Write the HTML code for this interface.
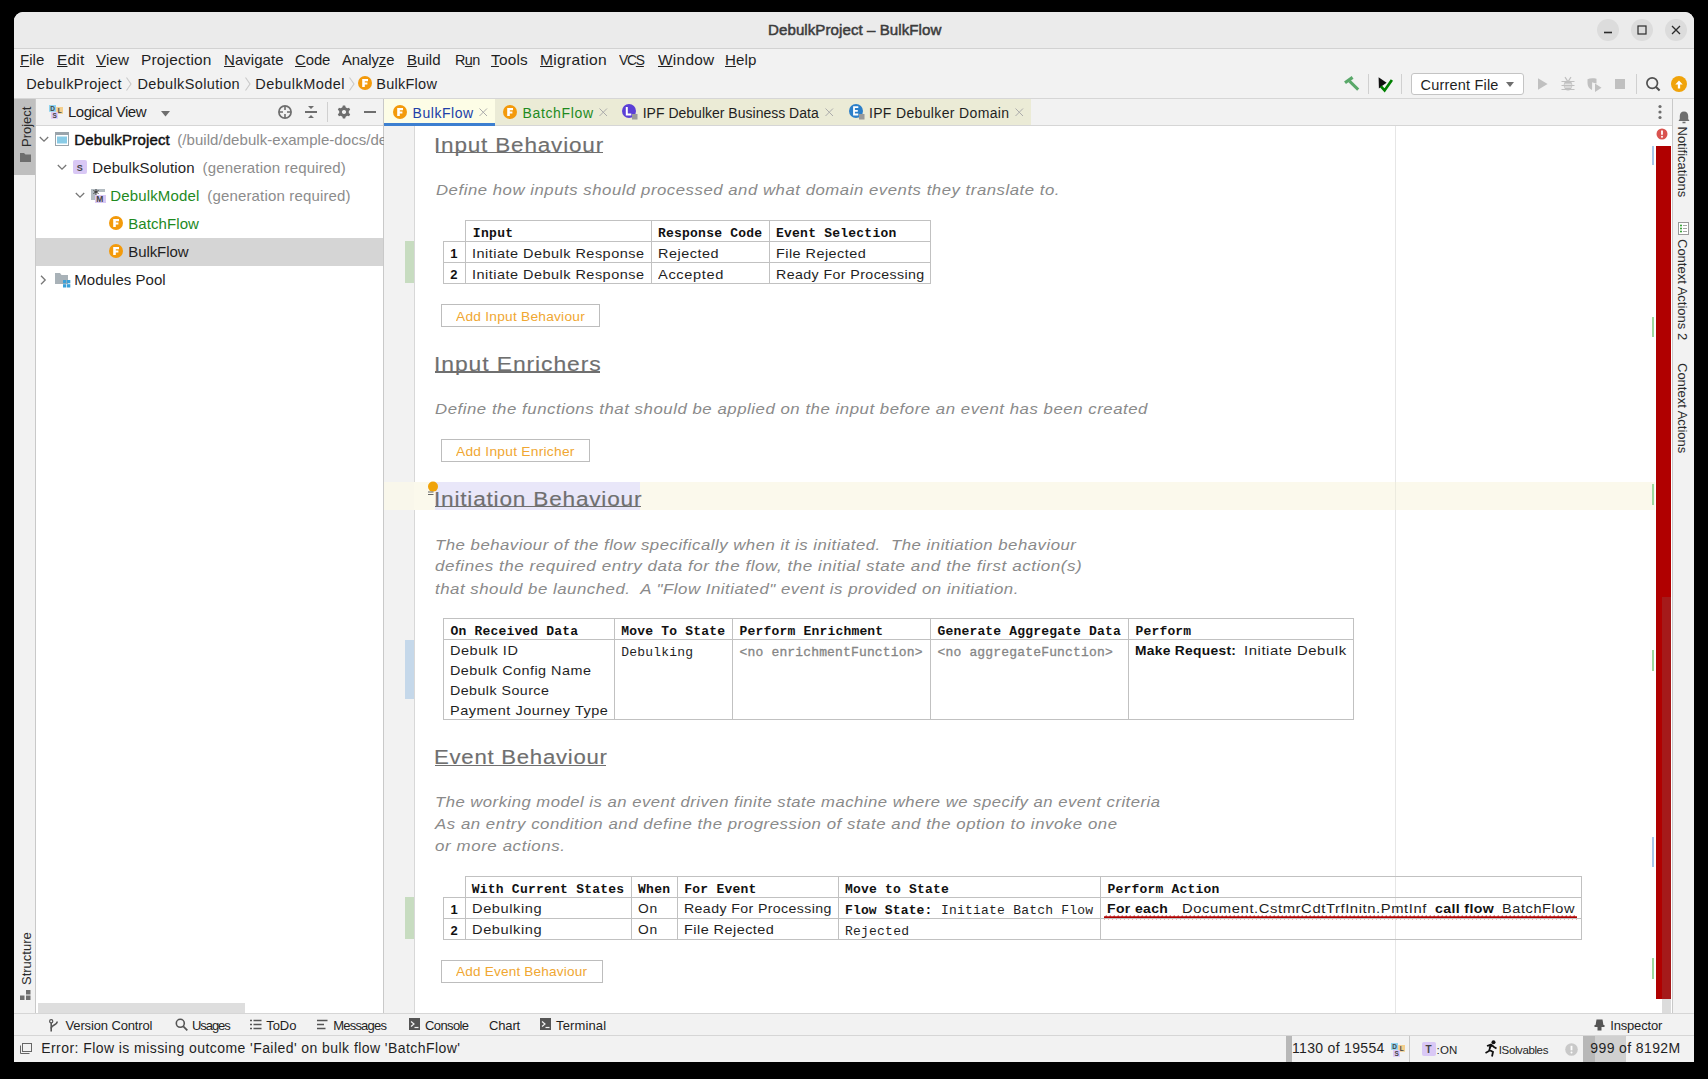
<!DOCTYPE html>
<html><head><meta charset="utf-8"><style>
html,body{margin:0;padding:0;}
body{width:1708px;height:1079px;position:relative;overflow:hidden;background:#000;font-family:"Liberation Sans", sans-serif;}
.a{position:absolute;}
.t{white-space:pre;}
</style></head><body>
<div class="a" style="left:14px;top:12px;width:1680px;height:1050px;background:#f2f2f2;border-radius:9px 9px 0 0;"></div>
<div class="a" style="left:14px;top:12px;width:1680px;height:37px;background:#ebebeb;border-radius:9px 9px 0 0;"></div>
<div class="a" style="left:14px;top:48px;width:1680px;height:1px;background:#d2d2d2;"></div>
<div class="a t" style="left:767.5px;top:21.30px;font-size:15px;line-height:18px;color:#3c3c3c;letter-spacing:0.054px;transform:scaleX(1.0073);transform-origin:0 0;-webkit-text-stroke:0.5px #3c3c3c;">DebulkProject – BulkFlow</div>
<div class="a" style="left:1597px;top:19px;width:22px;height:22px;background:#dcdcdc;border-radius:11px;"></div>
<div class="a" style="left:1631px;top:19px;width:22px;height:22px;background:#dcdcdc;border-radius:11px;"></div>
<div class="a" style="left:1665px;top:19px;width:22px;height:22px;background:#dcdcdc;border-radius:11px;"></div>
<svg class="a" style="left:1597px;top:19px;" width="22" height="22" viewBox="0 0 22 22"><path d="M7 13.5h8" stroke="#2b2b2b" stroke-width="1.6"/></svg>
<svg class="a" style="left:1631px;top:19px;" width="22" height="22" viewBox="0 0 22 22"><rect x="7" y="7" width="8" height="8" fill="none" stroke="#2b2b2b" stroke-width="1.2"/></svg>
<svg class="a" style="left:1665px;top:19px;" width="22" height="22" viewBox="0 0 22 22"><path d="M7 7l8 8M15 7l-8 8" stroke="#2b2b2b" stroke-width="1.3"/></svg>
<div class="a t" style="left:20.3px;top:51.30px;font-size:15px;line-height:18px;color:#1f1f1f;letter-spacing:0.019px;transform:scaleX(1.0024);transform-origin:0 0;text-underline-offset:1px;"><u>F</u>ile</div>
<div class="a t" style="left:57.3px;top:51.30px;font-size:15px;line-height:18px;color:#1f1f1f;letter-spacing:0.218px;transform:scaleX(1.0269);transform-origin:0 0;text-underline-offset:1px;"><u>E</u>dit</div>
<div class="a t" style="left:96px;top:51.30px;font-size:15px;line-height:18px;color:#1f1f1f;letter-spacing:0.107px;transform:scaleX(1.0104);transform-origin:0 0;text-underline-offset:1px;"><u>V</u>iew</div>
<div class="a t" style="left:141.2px;top:51.30px;font-size:15px;line-height:18px;color:#1f1f1f;letter-spacing:0.200px;transform:scaleX(1.0281);transform-origin:0 0;">Projection</div>
<div class="a t" style="left:224px;top:51.30px;font-size:15px;line-height:18px;color:#1f1f1f;letter-spacing:0.020px;transform:scaleX(1.0024);transform-origin:0 0;text-underline-offset:1px;"><u>N</u>avigate</div>
<div class="a t" style="left:295px;top:51.30px;font-size:15px;line-height:18px;color:#1f1f1f;letter-spacing:-0.080px;transform:scaleX(0.9932);transform-origin:0 0;text-underline-offset:1px;"><u>C</u>ode</div>
<div class="a t" style="left:341.9px;top:51.30px;font-size:15px;line-height:18px;color:#1f1f1f;letter-spacing:-0.082px;transform:scaleX(0.9907);transform-origin:0 0;text-underline-offset:1px;">Analy<u>z</u>e</div>
<div class="a t" style="left:407.2px;top:51.30px;font-size:15px;line-height:18px;color:#1f1f1f;letter-spacing:0.028px;transform:scaleX(1.0035);transform-origin:0 0;text-underline-offset:1px;"><u>B</u>uild</div>
<div class="a t" style="left:454.5px;top:51.30px;font-size:15px;line-height:18px;color:#1f1f1f;letter-spacing:-0.555px;transform:scaleX(0.9600);transform-origin:0 0;text-underline-offset:1px;">R<u>u</u>n</div>
<div class="a t" style="left:491.2px;top:51.30px;font-size:15px;line-height:18px;color:#1f1f1f;letter-spacing:0.204px;transform:scaleX(1.0244);transform-origin:0 0;text-underline-offset:1px;"><u>T</u>ools</div>
<div class="a t" style="left:540.3px;top:51.30px;font-size:15px;line-height:18px;color:#1f1f1f;letter-spacing:0.294px;transform:scaleX(1.0403);transform-origin:0 0;text-underline-offset:1px;"><u>M</u>igration</div>
<div class="a t" style="left:619.3px;top:51.30px;font-size:15px;line-height:18px;color:#1f1f1f;letter-spacing:-1.293px;transform:scaleX(0.9206);transform-origin:0 0;text-underline-offset:1px;">VC<u>S</u></div>
<div class="a t" style="left:657.8px;top:51.30px;font-size:15px;line-height:18px;color:#1f1f1f;letter-spacing:0.275px;transform:scaleX(1.0269);transform-origin:0 0;text-underline-offset:1px;"><u>W</u>indow</div>
<div class="a t" style="left:725px;top:51.30px;font-size:15px;line-height:18px;color:#1f1f1f;letter-spacing:0.070px;transform:scaleX(1.0071);transform-origin:0 0;text-underline-offset:1px;"><u>H</u>elp</div>
<div class="a t" style="left:26.2px;top:75.98px;font-size:14.5px;line-height:17px;color:#1f1f1f;letter-spacing:0.417px;">DebulkProject</div>
<div class="a t" style="left:137.4px;top:75.98px;font-size:14.5px;line-height:17px;color:#1f1f1f;letter-spacing:0.363px;">DebulkSolution</div>
<div class="a t" style="left:255.2px;top:75.98px;font-size:14.5px;line-height:17px;color:#1f1f1f;letter-spacing:0.473px;">DebulkModel</div>
<div class="a t" style="left:376.3px;top:75.98px;font-size:14.5px;line-height:17px;color:#1f1f1f;letter-spacing:0.249px;">BulkFlow</div>
<svg class="a" style="left:125px;top:76px;" width="8" height="16" viewBox="0 0 8 16"><path d="M1.5 1.5L6 8L1.5 14.5" fill="none" stroke="#c9c9c9" stroke-width="1.1"/></svg>
<svg class="a" style="left:244px;top:76px;" width="8" height="16" viewBox="0 0 8 16"><path d="M1.5 1.5L6 8L1.5 14.5" fill="none" stroke="#c9c9c9" stroke-width="1.1"/></svg>
<svg class="a" style="left:348px;top:76px;" width="8" height="16" viewBox="0 0 8 16"><path d="M1.5 1.5L6 8L1.5 14.5" fill="none" stroke="#c9c9c9" stroke-width="1.1"/></svg>
<svg class="a" style="left:357.5px;top:76px;" width="14" height="14" viewBox="0 0 14 14"><circle cx="7" cy="7" r="7" fill="#f39a0b"/><path d="M4.2 3h5.8v2.3H6.8v1.3h2.6v1.9H6.8V11H4.2z" fill="#fff"/></svg>
<svg class="a" style="left:1343px;top:76px;" width="18" height="16" viewBox="0 0 18 16"><path d="M2 6.8L9.6 1.4" stroke="#59a869" stroke-width="3.2"/><path d="M6.5 5.2L15.2 13.6" stroke="#59a869" stroke-width="3"/></svg>
<div class="a" style="left:1368px;top:74px;width:1px;height:20px;background:#d0d0d0;"></div>
<svg class="a" style="left:1377px;top:76px;" width="18" height="18" viewBox="0 0 18 18"><path d="M1.6 1.2L1.9 12.6 4.6 10.2 9.6 6.8z" fill="#111"/><path d="M3.9 10.3L7.6 14.4 14.9 3.9" fill="none" stroke="#008000" stroke-width="2.7"/></svg>
<div class="a" style="left:1401px;top:74px;width:1px;height:20px;background:#d0d0d0;"></div>
<div class="a" style="left:1411px;top:73px;width:113px;height:22px;background:#ffffff;border:1px solid #c4c4c4;box-sizing:border-box;border-radius:3px;"></div>
<div class="a t" style="left:1420.5px;top:76.98px;font-size:14.5px;line-height:17px;color:#1f1f1f;letter-spacing:0.193px;">Current File</div>
<svg class="a" style="left:1506px;top:82px;" width="8" height="5" viewBox="0 0 8 5"><path d="M0 0h8L4 5z" fill="#6e6e6e"/></svg>
<svg class="a" style="left:1538px;top:78px;" width="10" height="12" viewBox="0 0 10 12"><path d="M0 0.2L9.6 6 0 11.8z" fill="#c0c0c0"/></svg>
<svg class="a" style="left:1561px;top:76px;" width="14" height="15" viewBox="0 0 14 15"><path d="M4 1.2l2 3M10 1.2l-2 3" stroke="#c0c0c0" stroke-width="1.2"/><ellipse cx="7" cy="9.2" rx="4.3" ry="5.2" fill="#c0c0c0"/><path d="M0.5 5.5h13M0.5 9.5h13M0.5 13.5h13" stroke="#c0c0c0" stroke-width="1.2"/><path d="M3.5 8.2h7M3.5 11h7" stroke="#f2f2f2" stroke-width="1"/></svg>
<svg class="a" style="left:1586px;top:77px;" width="17" height="16" viewBox="0 0 17 16"><path d="M1.5 2.2C4 1.2 6.5 1 10.5 1.8V6.5L6.5 5.5V11.5L6 13 C3 11.5 1.5 9.5 1.5 6z" fill="#c0c0c0"/><path d="M9 6.5l6.5 4.3-6.5 4.3z" fill="#c0c0c0"/><path d="M6.5 5.5v8" stroke="#f2f2f2" stroke-width="0.8"/></svg>
<div class="a" style="left:1615px;top:79px;width:10px;height:10px;background:#c0c0c0;"></div>
<div class="a" style="left:1636px;top:74px;width:1px;height:20px;background:#d0d0d0;"></div>
<svg class="a" style="left:1645px;top:76px;" width="17" height="17" viewBox="0 0 17 17"><circle cx="7.2" cy="7.1" r="5.3" fill="none" stroke="#505050" stroke-width="1.7"/><path d="M11 11l3.6 3.6" stroke="#505050" stroke-width="2.1"/></svg>
<svg class="a" style="left:1671px;top:76px;" width="17" height="17" viewBox="0 0 17 17"><circle cx="8" cy="8" r="8" fill="#f0a30a"/><path d="M4.3 8.5L8 4.5 11.7 8.5z" fill="#fff"/><path d="M8 8v4.5" stroke="#fff" stroke-width="2.3"/></svg>
<div class="a" style="left:14px;top:98px;width:1680px;height:1px;background:#d6d6d6;"></div>
<div class="a" style="left:35px;top:99px;width:1px;height:914px;background:#c9c9c9;"></div>
<div class="a" style="left:14px;top:99px;width:21px;height:76px;background:#bfbfbf;"></div>
<div class="a t" style="left:0px;top:-12.00px;font-size:13px;line-height:16px;color:#2b2b2b;transform-origin:0 0;transform:translate(19px,147px) rotate(-90deg);left:0;top:0;">Project</div>
<svg class="a" style="left:20px;top:152px;" width="12" height="10" viewBox="0 0 12 10"><path d="M0 1h4l1.5 1.5H11V10H0z" fill="#6e6e6e"/></svg>
<div class="a t" style="left:0px;top:-12.00px;font-size:13px;line-height:16px;color:#2b2b2b;transform-origin:0 0;transform:translate(19px,985px) rotate(-90deg);left:0;top:0;">Structure</div>
<svg class="a" style="left:20px;top:990px;" width="11" height="10" viewBox="0 0 11 10"><rect x="6" y="0" width="4.5" height="4.5" fill="#6e6e6e"/><rect x="0" y="5.5" width="4.5" height="4.5" fill="#6e6e6e"/><rect x="6" y="5.5" width="4.5" height="4.5" fill="#6e6e6e"/></svg>
<div class="a" style="left:36px;top:99px;width:347px;height:27px;background:#f2f2f2;"></div>
<div class="a" style="left:36px;top:125px;width:347px;height:1px;background:#d6d6d6;"></div>
<div class="a" style="left:36px;top:126px;width:347px;height:887px;background:#ffffff;"></div>
<div class="a" style="left:383px;top:99px;width:1px;height:914px;background:#c9c9c9;"></div>
<svg class="a" style="left:48px;top:104px;" width="16" height="16" viewBox="0 0 16 16"><rect x="1" y="1" width="7" height="6.8" fill="#8fd3ee"/><rect x="8.2" y="3" width="6.8" height="6.8" fill="#f3cf8e"/><rect x="3" y="8" width="7" height="6.8" fill="#dccbf8"/><text x="2.3" y="7" font-size="6.5" font-weight="700" font-family="Liberation Sans" fill="#444">D</text><text x="9.8" y="9" font-size="6.5" font-weight="700" font-family="Liberation Sans" fill="#444">L</text><text x="4.5" y="14" font-size="6.5" font-weight="700" font-family="Liberation Sans" fill="#444">S</text></svg>
<div class="a t" style="left:68px;top:103.30px;font-size:15px;line-height:18px;color:#1f1f1f;letter-spacing:-0.496px;">Logical View</div>
<svg class="a" style="left:161px;top:110.5px;" width="10" height="6" viewBox="0 0 10 6"><path d="M0 0h9L4.5 5.5z" fill="#6e6e6e"/></svg>
<svg class="a" style="left:277px;top:104px;" width="16" height="16" viewBox="0 0 16 16"><circle cx="8" cy="8" r="6.1" fill="none" stroke="#6e6e6e" stroke-width="1.7"/><path d="M8 2v4M8 10v4M2 8h4M10 8h4" stroke="#6e6e6e" stroke-width="1.6"/></svg>
<svg class="a" style="left:304px;top:104px;" width="14" height="16" viewBox="0 0 14 16"><path d="M4 2h6L7 5z M4 14h6L7 11z" fill="#6e6e6e"/><path d="M1 8h12" stroke="#6e6e6e" stroke-width="2"/></svg>
<div class="a" style="left:327px;top:102px;width:1px;height:20px;background:#d0d0d0;"></div>
<svg class="a" style="left:336px;top:104px;" width="16" height="16" viewBox="0 0 16 16"><path fill-rule="evenodd" fill="#6e6e6e" d="M6.39 3.37 L6.83 1.50 L9.17 1.50 L9.61 3.37 L11.20 4.29 L13.04 3.74 L14.21 5.76 L12.81 7.08 L12.81 8.92 L14.21 10.24 L13.04 12.26 L11.20 11.71 L9.61 12.63 L9.17 14.50 L6.83 14.50 L6.39 12.63 L4.80 11.71 L2.96 12.26 L1.79 10.24 L3.19 8.92 L3.19 7.08 L1.79 5.76 L2.96 3.74 L4.80 4.29Z M8 5.9a2.1 2.1 0 1 0 0.001 0z"/></svg>
<div class="a" style="left:364px;top:111px;width:12px;height:2px;background:#6e6e6e;"></div>
<div class="a" style="left:36px;top:238px;width:347px;height:28px;background:#d5d5d5;"></div>
<svg class="a" style="left:38.8px;top:135.5px;" width="10" height="7" viewBox="0 0 10 7"><path d="M0.8 1l4.2 4.2L9.2 1" fill="none" stroke="#777" stroke-width="1.3"/></svg>
<svg class="a" style="left:55px;top:132px;" width="14" height="14" viewBox="0 0 14 14"><rect x="0.5" y="0.5" width="13" height="13" fill="#fff" stroke="#9aa4ab"/><rect x="0" y="0" width="14" height="3" fill="#9aa4ab"/><rect x="2" y="4.5" width="10" height="7" fill="#89cbe6"/></svg>
<div class="a t" style="left:74.3px;top:131.30px;font-size:15px;line-height:18px;color:#111;letter-spacing:0.176px;-webkit-text-stroke:0.45px #111;">DebulkProject</div>
<div class="a t" style="left:177.3px;top:131.30px;font-size:15px;line-height:18px;color:#8c8c8c;letter-spacing:0.05px;">(/build/debulk-example-docs/debulk</div>
<svg class="a" style="left:56.8px;top:163.5px;" width="10" height="7" viewBox="0 0 10 7"><path d="M0.8 1l4.2 4.2L9.2 1" fill="none" stroke="#777" stroke-width="1.3"/></svg>
<svg class="a" style="left:73px;top:160px;" width="14" height="14" viewBox="0 0 14 14"><rect x="0" y="0" width="14" height="14" rx="2" fill="#d9c8f5"/><text x="3.8" y="10.8" font-size="9" font-weight="700" font-family="Liberation Sans" fill="#444">S</text></svg>
<div class="a t" style="left:92.3px;top:159.30px;font-size:15px;line-height:18px;color:#1f1f1f;letter-spacing:0.100px;">DebulkSolution</div>
<div class="a t" style="left:202.5px;top:159.30px;font-size:15px;line-height:18px;color:#8c8c8c;letter-spacing:0.160px;">(generation required)</div>
<svg class="a" style="left:74.8px;top:191.5px;" width="10" height="7" viewBox="0 0 10 7"><path d="M0.8 1l4.2 4.2L9.2 1" fill="none" stroke="#777" stroke-width="1.3"/></svg>
<svg class="a" style="left:91px;top:188px;" width="16" height="16" viewBox="0 0 16 16"><path d="M0 1h14v3H5v8H0z" fill="#b4bcc2"/><rect x="4" y="7" width="11" height="8" fill="#d9c8f5"/><text x="5.3" y="14.3" font-size="8.5" font-family="Liberation Sans" font-weight="700" fill="#444">M</text><path d="M5 1v6M2.4 2.5l5.2 3M7.6 2.5l-5.2 3" stroke="#333" stroke-width="0.9"/></svg>
<div class="a t" style="left:110.3px;top:187.30px;font-size:15px;line-height:18px;color:#1e8a1e;letter-spacing:0.145px;">DebulkModel</div>
<div class="a t" style="left:207.3px;top:187.30px;font-size:15px;line-height:18px;color:#8c8c8c;letter-spacing:0.160px;">(generation required)</div>
<svg class="a" style="left:109px;top:216px;" width="14" height="14" viewBox="0 0 14 14"><circle cx="7" cy="7" r="7" fill="#f39a0b"/><path d="M4.2 3h5.8v2.3H6.8v1.3h2.6v1.9H6.8V11H4.2z" fill="#fff"/></svg>
<div class="a t" style="left:128.3px;top:215.30px;font-size:15px;line-height:18px;color:#1e8a1e;letter-spacing:0.071px;">BatchFlow</div>
<svg class="a" style="left:109px;top:244px;" width="14" height="14" viewBox="0 0 14 14"><circle cx="7" cy="7" r="7" fill="#f39a0b"/><path d="M4.2 3h5.8v2.3H6.8v1.3h2.6v1.9H6.8V11H4.2z" fill="#fff"/></svg>
<div class="a t" style="left:128.3px;top:243.30px;font-size:15px;line-height:18px;color:#1f1f1f;letter-spacing:-0.094px;">BulkFlow</div>
<svg class="a" style="left:39.8px;top:274.6px;" width="7" height="10" viewBox="0 0 7 10"><path d="M1 0.8l4.2 4.2L1 9.2" fill="none" stroke="#777" stroke-width="1.3"/></svg>
<svg class="a" style="left:55px;top:273px;" width="16" height="15" viewBox="0 0 16 15"><path d="M0 0h5l1.5 2H13V11H0z" fill="#a9b2b8"/><rect x="8" y="7" width="3.3" height="3.3" fill="#3aa0d8"/><rect x="12" y="7" width="3.3" height="3.3" fill="#3aa0d8"/><rect x="8" y="11.2" width="3.3" height="3.3" fill="#3aa0d8"/><rect x="12" y="11.2" width="3.3" height="3.3" fill="#3aa0d8"/></svg>
<div class="a t" style="left:74.3px;top:271.30px;font-size:15px;line-height:18px;color:#1f1f1f;letter-spacing:0.046px;">Modules Pool</div>
<div class="a" style="left:38px;top:1003px;width:207px;height:10px;background:#dedede;"></div>
<div class="a" style="left:384px;top:99px;width:1288px;height:27px;background:#f2f2f2;"></div>
<div class="a" style="left:495px;top:99px;width:536px;height:26px;background:#ebebd6;"></div>
<div class="a" style="left:384px;top:99px;width:111px;height:26px;background:#fdfde6;"></div>
<div class="a" style="left:384px;top:125px;width:1288px;height:1px;background:#d6d6d6;"></div>
<div class="a" style="left:384px;top:123px;width:111px;height:3px;background:#3d7fd0;"></div>
<svg class="a" style="left:393px;top:105px;" width="14" height="14" viewBox="0 0 14 14"><circle cx="7" cy="7" r="7" fill="#f39a0b"/><path d="M4.2 3h5.8v2.3H6.8v1.3h2.6v1.9H6.8V11H4.2z" fill="#fff"/></svg>
<div class="a t" style="left:412.6px;top:105.15px;font-size:14px;line-height:17px;color:#2140a8;letter-spacing:0.549px;">BulkFlow</div>
<svg class="a" style="left:479px;top:108px;" width="9" height="9" viewBox="0 0 9 9"><path d="M0.5 0.5l7.5 7.5M8 0.5l-7.5 7.5" stroke="#ababab" stroke-width="1"/></svg>
<svg class="a" style="left:502.5px;top:105px;" width="14" height="14" viewBox="0 0 14 14"><circle cx="7" cy="7" r="7" fill="#f39a0b"/><path d="M4.2 3h5.8v2.3H6.8v1.3h2.6v1.9H6.8V11H4.2z" fill="#fff"/></svg>
<div class="a t" style="left:522.5px;top:105.15px;font-size:14px;line-height:17px;color:#1e8a1e;letter-spacing:0.648px;">BatchFlow</div>
<svg class="a" style="left:599px;top:108px;" width="9" height="9" viewBox="0 0 9 9"><path d="M0.5 0.5l7.5 7.5M8 0.5l-7.5 7.5" stroke="#ababab" stroke-width="1"/></svg>
<svg class="a" style="left:622px;top:104px;" width="16" height="16" viewBox="0 0 16 16"><circle cx="7" cy="7" r="7" fill="#5b3fd6"/><path d="M4.8 3v7.5h4.5" fill="none" stroke="#fff" stroke-width="2"/><rect x="10" y="10" width="5.5" height="5.5" fill="#9a9a9a"/></svg>
<div class="a t" style="left:642.7px;top:105.15px;font-size:14px;line-height:17px;color:#1f1f1f;letter-spacing:0.007px;">IPF Debulker Business Data</div>
<svg class="a" style="left:825px;top:108px;" width="9" height="9" viewBox="0 0 9 9"><path d="M0.5 0.5l7.5 7.5M8 0.5l-7.5 7.5" stroke="#ababab" stroke-width="1"/></svg>
<svg class="a" style="left:849px;top:104px;" width="16" height="16" viewBox="0 0 16 16"><circle cx="7" cy="7" r="7" fill="#2b7fc9"/><path d="M9.3 3.2H5v7.3h4.3M5 6.8h3.8" fill="none" stroke="#fff" stroke-width="1.8"/><rect x="10" y="10" width="5.5" height="5.5" fill="#9a9a9a"/></svg>
<div class="a t" style="left:868.9px;top:105.15px;font-size:14px;line-height:17px;color:#1f1f1f;letter-spacing:0.351px;">IPF Debulker Domain</div>
<svg class="a" style="left:1015px;top:108px;" width="9" height="9" viewBox="0 0 9 9"><path d="M0.5 0.5l7.5 7.5M8 0.5l-7.5 7.5" stroke="#ababab" stroke-width="1"/></svg>
<svg class="a" style="left:1656px;top:104px;" width="8" height="16" viewBox="0 0 8 16"><circle cx="4" cy="2.5" r="1.6" fill="#6e6e6e"/><circle cx="4" cy="8" r="1.6" fill="#6e6e6e"/><circle cx="4" cy="13.5" r="1.6" fill="#6e6e6e"/></svg>
<div class="a" style="left:384px;top:126px;width:1288px;height:887px;background:#ffffff;"></div>
<div class="a" style="left:384px;top:126px;width:30px;height:887px;background:#f2f2f2;"></div>
<div class="a" style="left:414px;top:126px;width:1px;height:887px;background:#d8d8d8;"></div>
<div class="a" style="left:1395px;top:126px;width:1px;height:887px;background:#e6e6e6;"></div>
<div class="a" style="left:384px;top:482px;width:1271px;height:28px;background:#fbf9ec;"></div>
<div class="a" style="left:384px;top:482px;width:30px;height:28px;background:#f9f7eb;"></div>
<div class="a" style="left:1395px;top:482px;width:1px;height:28px;background:#ecebdf;"></div>
<div class="a" style="left:435px;top:482px;width:205px;height:28px;background:#e9e7f9;"></div>
<div class="a" style="left:405px;top:241px;width:9px;height:42px;background:#c7dcc0;"></div>
<div class="a" style="left:405px;top:640px;width:9px;height:59px;background:#c5d8ea;"></div>
<div class="a" style="left:405px;top:897px;width:9px;height:42px;background:#c7dcc0;"></div>
<div class="a t" style="left:434.3px;top:132.57px;font-size:20px;line-height:24px;color:#6f6f6f;letter-spacing:0.734px;transform:scaleX(1.1248);transform-origin:0 0;-webkit-text-stroke:0.15px #6f6f6f;">Input Behaviour</div>
<div class="a" style="left:435.5px;top:152.2px;width:167.2px;height:1.3px;background:#6f6f6f;"></div>
<div class="a t" style="left:435.5px;top:181.30px;font-size:15px;line-height:18px;color:#8a8a8a;font-style:italic;letter-spacing:0.481px;transform:scaleX(1.1156);transform-origin:0 0;">Define how inputs should processed and what domain events they translate to.</div>
<div class="a" style="left:465px;top:220px;width:466px;height:1px;background:#c1c1c1;"></div>
<div class="a" style="left:443px;top:241px;width:488px;height:1px;background:#c1c1c1;"></div>
<div class="a" style="left:443px;top:262px;width:488px;height:1px;background:#c1c1c1;"></div>
<div class="a" style="left:443px;top:283px;width:488px;height:1px;background:#c1c1c1;"></div>
<div class="a" style="left:443px;top:241px;width:1px;height:43px;background:#c1c1c1;"></div>
<div class="a" style="left:465px;top:220px;width:1px;height:64px;background:#c1c1c1;"></div>
<div class="a" style="left:651px;top:220px;width:1px;height:64px;background:#c1c1c1;"></div>
<div class="a" style="left:769px;top:220px;width:1px;height:64px;background:#c1c1c1;"></div>
<div class="a" style="left:930px;top:220px;width:1px;height:64px;background:#c1c1c1;"></div>
<div class="a t" style="left:472.8px;top:226.04px;font-size:13px;line-height:16px;color:#111111;font-family:'Liberation Mono', monospace;font-weight:700;letter-spacing:0.316px;">Input</div>
<div class="a t" style="left:657.9px;top:226.04px;font-size:13px;line-height:16px;color:#111111;font-family:'Liberation Mono', monospace;font-weight:700;letter-spacing:0.238px;">Response Code</div>
<div class="a t" style="left:776px;top:226.04px;font-size:13px;line-height:16px;color:#111111;font-family:'Liberation Mono', monospace;font-weight:700;letter-spacing:0.232px;">Event Selection</div>
<div class="a t" style="left:450.2px;top:246.00px;font-size:13px;line-height:16px;color:#111111;font-weight:700;">1</div>
<div class="a t" style="left:450.2px;top:267.00px;font-size:13px;line-height:16px;color:#111111;font-weight:700;">2</div>
<div class="a t" style="left:472.3px;top:246.00px;font-size:13px;line-height:16px;color:#1f1f1f;letter-spacing:0.427px;transform:scaleX(1.1142);transform-origin:0 0;">Initiate Debulk Response</div>
<div class="a t" style="left:472.3px;top:267.00px;font-size:13px;line-height:16px;color:#1f1f1f;letter-spacing:0.427px;transform:scaleX(1.1142);transform-origin:0 0;">Initiate Debulk Response</div>
<div class="a t" style="left:657.9px;top:246.00px;font-size:13px;line-height:16px;color:#1f1f1f;letter-spacing:0.472px;transform:scaleX(1.1089);transform-origin:0 0;">Rejected</div>
<div class="a t" style="left:657.9px;top:267.00px;font-size:13px;line-height:16px;color:#1f1f1f;letter-spacing:0.563px;transform:scaleX(1.1244);transform-origin:0 0;">Accepted</div>
<div class="a t" style="left:776px;top:246.00px;font-size:13px;line-height:16px;color:#1f1f1f;letter-spacing:0.414px;transform:scaleX(1.1103);transform-origin:0 0;">File Rejected</div>
<div class="a t" style="left:776px;top:267.00px;font-size:13px;line-height:16px;color:#1f1f1f;letter-spacing:0.377px;transform:scaleX(1.0918);transform-origin:0 0;">Ready For Processing</div>
<div class="a" style="left:441px;top:304px;width:159px;height:23px;background:#ffffff;border:1px solid #bdbdbd;box-sizing:border-box;"></div>
<div class="a t" style="left:456.3px;top:309.00px;font-size:13px;line-height:16px;color:#f0a732;letter-spacing:0.229px;transform:scaleX(1.0557);transform-origin:0 0;">Add Input Behaviour</div>
<div class="a t" style="left:434.0px;top:351.57px;font-size:20px;line-height:24px;color:#6f6f6f;letter-spacing:0.799px;transform:scaleX(1.1439);transform-origin:0 0;-webkit-text-stroke:0.15px #6f6f6f;">Input Enrichers</div>
<div class="a" style="left:435.2px;top:371.3px;width:164.7px;height:1.3px;background:#6f6f6f;"></div>
<div class="a t" style="left:435.2px;top:400.30px;font-size:15px;line-height:18px;color:#8a8a8a;font-style:italic;letter-spacing:0.478px;transform:scaleX(1.1190);transform-origin:0 0;">Define the functions that should be applied on the input before an event has been created</div>
<div class="a" style="left:441px;top:439px;width:149px;height:23px;background:#ffffff;border:1px solid #bdbdbd;box-sizing:border-box;"></div>
<div class="a t" style="left:455.9px;top:444.00px;font-size:13px;line-height:16px;color:#f0a732;letter-spacing:0.237px;transform:scaleX(1.0600);transform-origin:0 0;">Add Input Enricher</div>
<div class="a t" style="left:434.0px;top:486.57px;font-size:20px;line-height:24px;color:#6f6f6f;letter-spacing:0.692px;transform:scaleX(1.1321);transform-origin:0 0;-webkit-text-stroke:0.15px #6f6f6f;">Initiation Behaviour</div>
<div class="a" style="left:435.2px;top:506.2px;width:205.5px;height:1.3px;background:#6f6f6f;"></div>
<svg class="a" style="left:426px;top:480px;" width="14" height="18" viewBox="0 0 14 18"><circle cx="7" cy="6.6" r="5" fill="#f0a30a"/><path d="M2 12h5.5M2 14.5h5.5" stroke="#555" stroke-width="0.9"/></svg>
<div class="a t" style="left:435.2px;top:536.30px;font-size:15px;line-height:18px;color:#8a8a8a;font-style:italic;letter-spacing:0.444px;transform:scaleX(1.1185);transform-origin:0 0;">The behaviour of the flow specifically when it is initiated.  The initiation behaviour</div>
<div class="a t" style="left:435.2px;top:557.30px;font-size:15px;line-height:18px;color:#8a8a8a;font-style:italic;letter-spacing:0.484px;transform:scaleX(1.1342);transform-origin:0 0;">defines the required entry data for the flow, the initial state and the first action(s)</div>
<div class="a t" style="left:435.2px;top:580.30px;font-size:15px;line-height:18px;color:#8a8a8a;font-style:italic;letter-spacing:0.458px;transform:scaleX(1.1207);transform-origin:0 0;">that should be launched.  A &quot;Flow Initiated&quot; event is provided on initiation.</div>
<div class="a" style="left:443px;top:618px;width:911px;height:1px;background:#c1c1c1;"></div>
<div class="a" style="left:443px;top:639px;width:911px;height:1px;background:#c1c1c1;"></div>
<div class="a" style="left:443px;top:719px;width:911px;height:1px;background:#c1c1c1;"></div>
<div class="a" style="left:443px;top:618px;width:1px;height:102px;background:#c1c1c1;"></div>
<div class="a" style="left:614px;top:618px;width:1px;height:102px;background:#c1c1c1;"></div>
<div class="a" style="left:732px;top:618px;width:1px;height:102px;background:#c1c1c1;"></div>
<div class="a" style="left:930px;top:618px;width:1px;height:102px;background:#c1c1c1;"></div>
<div class="a" style="left:1128px;top:618px;width:1px;height:102px;background:#c1c1c1;"></div>
<div class="a" style="left:1353px;top:618px;width:1px;height:102px;background:#c1c1c1;"></div>
<div class="a t" style="left:450.4px;top:624.04px;font-size:13px;line-height:16px;color:#111111;font-family:'Liberation Mono', monospace;font-weight:700;letter-spacing:0.197px;">On Received Data</div>
<div class="a t" style="left:621.3px;top:624.04px;font-size:13px;line-height:16px;color:#111111;font-family:'Liberation Mono', monospace;font-weight:700;letter-spacing:0.205px;">Move To State</div>
<div class="a t" style="left:739.6px;top:624.04px;font-size:13px;line-height:16px;color:#111111;font-family:'Liberation Mono', monospace;font-weight:700;letter-spacing:0.185px;">Perform Enrichment</div>
<div class="a t" style="left:937.5px;top:624.04px;font-size:13px;line-height:16px;color:#111111;font-family:'Liberation Mono', monospace;font-weight:700;letter-spacing:0.175px;">Generate Aggregate Data</div>
<div class="a t" style="left:1135.4px;top:624.04px;font-size:13px;line-height:16px;color:#111111;font-family:'Liberation Mono', monospace;font-weight:700;letter-spacing:0.195px;">Perform</div>
<div class="a t" style="left:450.4px;top:643.00px;font-size:13px;line-height:16px;color:#1f1f1f;letter-spacing:0.480px;transform:scaleX(1.1141);transform-origin:0 0;">Debulk ID</div>
<div class="a t" style="left:450.4px;top:663.00px;font-size:13px;line-height:16px;color:#1f1f1f;letter-spacing:0.444px;transform:scaleX(1.1049);transform-origin:0 0;">Debulk Config Name</div>
<div class="a t" style="left:450.4px;top:683.00px;font-size:13px;line-height:16px;color:#1f1f1f;letter-spacing:0.411px;transform:scaleX(1.0958);transform-origin:0 0;">Debulk Source</div>
<div class="a t" style="left:450.4px;top:703.00px;font-size:13px;line-height:16px;color:#1f1f1f;letter-spacing:0.473px;transform:scaleX(1.1139);transform-origin:0 0;">Payment Journey Type</div>
<div class="a t" style="left:621.3px;top:645.04px;font-size:13px;line-height:16px;color:#1f1f1f;font-family:'Liberation Mono', monospace;letter-spacing:0.183px;">Debulking</div>
<div class="a t" style="left:739.6px;top:645.04px;font-size:13px;line-height:16px;color:#858585;font-family:'Liberation Mono', monospace;letter-spacing:0.156px;-webkit-text-stroke:0.3px #858585;">&lt;no enrichmentFunction&gt;</div>
<div class="a t" style="left:937.5px;top:645.04px;font-size:13px;line-height:16px;color:#858585;font-family:'Liberation Mono', monospace;letter-spacing:0.173px;-webkit-text-stroke:0.3px #858585;">&lt;no aggregateFunction&gt;</div>
<div class="a t" style="left:1135.4px;top:643.00px;font-size:13px;line-height:16px;color:#111;font-weight:700;letter-spacing:0.287px;transform:scaleX(1.0602);transform-origin:0 0;">Make Request:</div>
<div class="a t" style="left:1244.3px;top:643.00px;font-size:13px;line-height:16px;color:#1f1f1f;letter-spacing:0.489px;transform:scaleX(1.1440);transform-origin:0 0;">Initiate Debulk</div>
<div class="a t" style="left:433.90000000000003px;top:744.57px;font-size:20px;line-height:24px;color:#6f6f6f;letter-spacing:0.672px;transform:scaleX(1.1073);transform-origin:0 0;-webkit-text-stroke:0.15px #6f6f6f;">Event Behaviour</div>
<div class="a" style="left:435.1px;top:764.9px;width:171px;height:1.3px;background:#6f6f6f;"></div>
<div class="a t" style="left:435.1px;top:793.30px;font-size:15px;line-height:18px;color:#8a8a8a;font-style:italic;letter-spacing:0.447px;transform:scaleX(1.1109);transform-origin:0 0;">The working model is an event driven finite state machine where we specify an event criteria</div>
<div class="a t" style="left:435.1px;top:815.30px;font-size:15px;line-height:18px;color:#8a8a8a;font-style:italic;letter-spacing:0.479px;transform:scaleX(1.1206);transform-origin:0 0;">As an entry condition and define the progression of state and the option to invoke one</div>
<div class="a t" style="left:435.1px;top:837.30px;font-size:15px;line-height:18px;color:#8a8a8a;font-style:italic;letter-spacing:0.529px;transform:scaleX(1.1258);transform-origin:0 0;">or more actions.</div>
<div class="a" style="left:465px;top:876px;width:1117px;height:1px;background:#c1c1c1;"></div>
<div class="a" style="left:443px;top:897px;width:1139px;height:1px;background:#c1c1c1;"></div>
<div class="a" style="left:443px;top:918px;width:1139px;height:1px;background:#c1c1c1;"></div>
<div class="a" style="left:443px;top:939px;width:1139px;height:1px;background:#c1c1c1;"></div>
<div class="a" style="left:443px;top:897px;width:1px;height:43px;background:#c1c1c1;"></div>
<div class="a" style="left:465px;top:876px;width:1px;height:64px;background:#c1c1c1;"></div>
<div class="a" style="left:631px;top:876px;width:1px;height:64px;background:#c1c1c1;"></div>
<div class="a" style="left:677px;top:876px;width:1px;height:64px;background:#c1c1c1;"></div>
<div class="a" style="left:838px;top:876px;width:1px;height:64px;background:#c1c1c1;"></div>
<div class="a" style="left:1100px;top:876px;width:1px;height:64px;background:#c1c1c1;"></div>
<div class="a" style="left:1581px;top:876px;width:1px;height:64px;background:#c1c1c1;"></div>
<div class="a t" style="left:471.7px;top:882.04px;font-size:13px;line-height:16px;color:#111111;font-family:'Liberation Mono', monospace;font-weight:700;letter-spacing:0.236px;">With Current States</div>
<div class="a t" style="left:637.9px;top:882.04px;font-size:13px;line-height:16px;color:#111111;font-family:'Liberation Mono', monospace;font-weight:700;letter-spacing:0.320px;">When</div>
<div class="a t" style="left:684.3px;top:882.04px;font-size:13px;line-height:16px;color:#111111;font-family:'Liberation Mono', monospace;font-weight:700;letter-spacing:0.220px;">For Event</div>
<div class="a t" style="left:845px;top:882.04px;font-size:13px;line-height:16px;color:#111111;font-family:'Liberation Mono', monospace;font-weight:700;letter-spacing:0.197px;">Move to State</div>
<div class="a t" style="left:1107.4px;top:882.04px;font-size:13px;line-height:16px;color:#111111;font-family:'Liberation Mono', monospace;font-weight:700;letter-spacing:0.205px;">Perform Action</div>
<div class="a t" style="left:450.6px;top:902.00px;font-size:13px;line-height:16px;color:#111111;font-weight:700;">1</div>
<div class="a t" style="left:450.6px;top:923.00px;font-size:13px;line-height:16px;color:#111111;font-weight:700;">2</div>
<div class="a t" style="left:471.7px;top:901.00px;font-size:13px;line-height:16px;color:#1f1f1f;letter-spacing:0.523px;transform:scaleX(1.1236);transform-origin:0 0;">Debulking</div>
<div class="a t" style="left:637.9px;top:901.00px;font-size:13px;line-height:16px;color:#1f1f1f;letter-spacing:0.653px;transform:scaleX(1.0629);transform-origin:0 0;">On</div>
<div class="a t" style="left:471.7px;top:922.00px;font-size:13px;line-height:16px;color:#1f1f1f;letter-spacing:0.523px;transform:scaleX(1.1236);transform-origin:0 0;">Debulking</div>
<div class="a t" style="left:637.9px;top:922.00px;font-size:13px;line-height:16px;color:#1f1f1f;letter-spacing:0.653px;transform:scaleX(1.0629);transform-origin:0 0;">On</div>
<div class="a t" style="left:684.3px;top:901.00px;font-size:13px;line-height:16px;color:#1f1f1f;letter-spacing:0.363px;transform:scaleX(1.0880);transform-origin:0 0;">Ready For Processing</div>
<div class="a t" style="left:684.3px;top:922.00px;font-size:13px;line-height:16px;color:#1f1f1f;letter-spacing:0.417px;transform:scaleX(1.1111);transform-origin:0 0;">File Rejected</div>
<div class="a t" style="left:845px;top:903.04px;font-size:13px;line-height:16px;color:#111111;font-family:'Liberation Mono', monospace;font-weight:700;letter-spacing:0.155px;">Flow State:</div>
<div class="a t" style="left:941px;top:903.04px;font-size:13px;line-height:16px;color:#1f1f1f;font-family:'Liberation Mono', monospace;letter-spacing:0.214px;">Initiate Batch Flow</div>
<div class="a t" style="left:845px;top:924.04px;font-size:13px;line-height:16px;color:#1f1f1f;font-family:'Liberation Mono', monospace;letter-spacing:0.223px;">Rejected</div>
<div class="a t" style="left:1107.4px;top:901.00px;font-size:13px;line-height:16px;color:#111;font-weight:700;letter-spacing:0.351px;transform:scaleX(1.0741);transform-origin:0 0;">For each</div>
<div class="a t" style="left:1182px;top:901.00px;font-size:13px;line-height:16px;color:#1f1f1f;letter-spacing:0.515px;transform:scaleX(1.1374);transform-origin:0 0;">Document.CstmrCdtTrfInitn.PmtInf</div>
<div class="a t" style="left:1434.6px;top:901.00px;font-size:13px;line-height:16px;color:#111;font-weight:700;letter-spacing:0.339px;transform:scaleX(1.0877);transform-origin:0 0;">call flow</div>
<div class="a t" style="left:1501.6px;top:901.00px;font-size:13px;line-height:16px;color:#1f1f1f;letter-spacing:0.523px;transform:scaleX(1.1169);transform-origin:0 0;">BatchFlow</div>
<svg class="a" style="left:1104px;top:913px;" width="474" height="8" viewBox="0 0 474 8"><rect x="0" y="3.3" width="473" height="1.7" fill="#b00000"/><path d="M1 3.6l1.2 -1.3 1.2 1.3zM5 3.6l1.2 -1.3 1.2 1.3zM9 3.6l1.2 -1.3 1.2 1.3zM13 3.6l1.2 -1.3 1.2 1.3zM17 3.6l1.2 -1.3 1.2 1.3zM21 3.6l1.2 -1.3 1.2 1.3zM25 3.6l1.2 -1.3 1.2 1.3zM29 3.6l1.2 -1.3 1.2 1.3zM33 3.6l1.2 -1.3 1.2 1.3zM37 3.6l1.2 -1.3 1.2 1.3zM41 3.6l1.2 -1.3 1.2 1.3zM45 3.6l1.2 -1.3 1.2 1.3zM49 3.6l1.2 -1.3 1.2 1.3zM53 3.6l1.2 -1.3 1.2 1.3zM57 3.6l1.2 -1.3 1.2 1.3zM61 3.6l1.2 -1.3 1.2 1.3zM65 3.6l1.2 -1.3 1.2 1.3zM69 3.6l1.2 -1.3 1.2 1.3zM73 3.6l1.2 -1.3 1.2 1.3zM77 3.6l1.2 -1.3 1.2 1.3zM81 3.6l1.2 -1.3 1.2 1.3zM85 3.6l1.2 -1.3 1.2 1.3zM89 3.6l1.2 -1.3 1.2 1.3zM93 3.6l1.2 -1.3 1.2 1.3zM97 3.6l1.2 -1.3 1.2 1.3zM101 3.6l1.2 -1.3 1.2 1.3zM105 3.6l1.2 -1.3 1.2 1.3zM109 3.6l1.2 -1.3 1.2 1.3zM113 3.6l1.2 -1.3 1.2 1.3zM117 3.6l1.2 -1.3 1.2 1.3zM121 3.6l1.2 -1.3 1.2 1.3zM125 3.6l1.2 -1.3 1.2 1.3zM129 3.6l1.2 -1.3 1.2 1.3zM133 3.6l1.2 -1.3 1.2 1.3zM137 3.6l1.2 -1.3 1.2 1.3zM141 3.6l1.2 -1.3 1.2 1.3zM145 3.6l1.2 -1.3 1.2 1.3zM149 3.6l1.2 -1.3 1.2 1.3zM153 3.6l1.2 -1.3 1.2 1.3zM157 3.6l1.2 -1.3 1.2 1.3zM161 3.6l1.2 -1.3 1.2 1.3zM165 3.6l1.2 -1.3 1.2 1.3zM169 3.6l1.2 -1.3 1.2 1.3zM173 3.6l1.2 -1.3 1.2 1.3zM177 3.6l1.2 -1.3 1.2 1.3zM181 3.6l1.2 -1.3 1.2 1.3zM185 3.6l1.2 -1.3 1.2 1.3zM189 3.6l1.2 -1.3 1.2 1.3zM193 3.6l1.2 -1.3 1.2 1.3zM197 3.6l1.2 -1.3 1.2 1.3zM201 3.6l1.2 -1.3 1.2 1.3zM205 3.6l1.2 -1.3 1.2 1.3zM209 3.6l1.2 -1.3 1.2 1.3zM213 3.6l1.2 -1.3 1.2 1.3zM217 3.6l1.2 -1.3 1.2 1.3zM221 3.6l1.2 -1.3 1.2 1.3zM225 3.6l1.2 -1.3 1.2 1.3zM229 3.6l1.2 -1.3 1.2 1.3zM233 3.6l1.2 -1.3 1.2 1.3zM237 3.6l1.2 -1.3 1.2 1.3zM241 3.6l1.2 -1.3 1.2 1.3zM245 3.6l1.2 -1.3 1.2 1.3zM249 3.6l1.2 -1.3 1.2 1.3zM253 3.6l1.2 -1.3 1.2 1.3zM257 3.6l1.2 -1.3 1.2 1.3zM261 3.6l1.2 -1.3 1.2 1.3zM265 3.6l1.2 -1.3 1.2 1.3zM269 3.6l1.2 -1.3 1.2 1.3zM273 3.6l1.2 -1.3 1.2 1.3zM277 3.6l1.2 -1.3 1.2 1.3zM281 3.6l1.2 -1.3 1.2 1.3zM285 3.6l1.2 -1.3 1.2 1.3zM289 3.6l1.2 -1.3 1.2 1.3zM293 3.6l1.2 -1.3 1.2 1.3zM297 3.6l1.2 -1.3 1.2 1.3zM301 3.6l1.2 -1.3 1.2 1.3zM305 3.6l1.2 -1.3 1.2 1.3zM309 3.6l1.2 -1.3 1.2 1.3zM313 3.6l1.2 -1.3 1.2 1.3zM317 3.6l1.2 -1.3 1.2 1.3zM321 3.6l1.2 -1.3 1.2 1.3zM325 3.6l1.2 -1.3 1.2 1.3zM329 3.6l1.2 -1.3 1.2 1.3zM333 3.6l1.2 -1.3 1.2 1.3zM337 3.6l1.2 -1.3 1.2 1.3zM341 3.6l1.2 -1.3 1.2 1.3zM345 3.6l1.2 -1.3 1.2 1.3zM349 3.6l1.2 -1.3 1.2 1.3zM353 3.6l1.2 -1.3 1.2 1.3zM357 3.6l1.2 -1.3 1.2 1.3zM361 3.6l1.2 -1.3 1.2 1.3zM365 3.6l1.2 -1.3 1.2 1.3zM369 3.6l1.2 -1.3 1.2 1.3zM373 3.6l1.2 -1.3 1.2 1.3zM377 3.6l1.2 -1.3 1.2 1.3zM381 3.6l1.2 -1.3 1.2 1.3zM385 3.6l1.2 -1.3 1.2 1.3zM389 3.6l1.2 -1.3 1.2 1.3zM393 3.6l1.2 -1.3 1.2 1.3zM397 3.6l1.2 -1.3 1.2 1.3zM401 3.6l1.2 -1.3 1.2 1.3zM405 3.6l1.2 -1.3 1.2 1.3zM409 3.6l1.2 -1.3 1.2 1.3zM413 3.6l1.2 -1.3 1.2 1.3zM417 3.6l1.2 -1.3 1.2 1.3zM421 3.6l1.2 -1.3 1.2 1.3zM425 3.6l1.2 -1.3 1.2 1.3zM429 3.6l1.2 -1.3 1.2 1.3zM433 3.6l1.2 -1.3 1.2 1.3zM437 3.6l1.2 -1.3 1.2 1.3zM441 3.6l1.2 -1.3 1.2 1.3zM445 3.6l1.2 -1.3 1.2 1.3zM449 3.6l1.2 -1.3 1.2 1.3zM453 3.6l1.2 -1.3 1.2 1.3zM457 3.6l1.2 -1.3 1.2 1.3zM461 3.6l1.2 -1.3 1.2 1.3zM465 3.6l1.2 -1.3 1.2 1.3zM469 3.6l1.2 -1.3 1.2 1.3z" fill="#b00000"/><path d="M0 6.5h473" stroke="#f2b8b8" stroke-width="1" stroke-dasharray="1 3"/></svg>
<div class="a" style="left:441px;top:960px;width:162px;height:23px;background:#ffffff;border:1px solid #bdbdbd;box-sizing:border-box;"></div>
<div class="a t" style="left:456.2px;top:964.00px;font-size:13px;line-height:16px;color:#f0a732;letter-spacing:0.188px;transform:scaleX(1.0437);transform-origin:0 0;">Add Event Behaviour</div>
<svg class="a" style="left:1656px;top:128px;" width="12" height="12" viewBox="0 0 12 12"><circle cx="6" cy="6" r="5.5" fill="#d9534f"/><path d="M6 2.5v4.3" stroke="#fff" stroke-width="1.8"/><circle cx="6" cy="8.8" r="1" fill="#fff"/></svg>
<div class="a" style="left:1656px;top:146px;width:15px;height:853px;background:#b00000;"></div>
<div class="a" style="left:1662px;top:597px;width:9px;height:402px;background:#a51a1a;"></div>
<div class="a" style="left:1662px;top:999px;width:9px;height:14px;background:#dcdcdc;"></div>
<div class="a" style="left:1652px;top:146px;width:1.5px;height:19px;background:#a8c8ea;"></div>
<div class="a" style="left:1652px;top:317px;width:1.5px;height:20px;background:#9fd89f;"></div>
<div class="a" style="left:1652px;top:484px;width:1.5px;height:21px;background:#9fd89f;"></div>
<div class="a" style="left:1652px;top:650px;width:1.5px;height:21px;background:#9fd89f;"></div>
<div class="a" style="left:1652px;top:958px;width:1.5px;height:21px;background:#9fd89f;"></div>
<div class="a" style="left:1652px;top:837px;width:2px;height:30px;background:#a8c8ea;"></div>
<div class="a" style="left:1672px;top:99px;width:1px;height:914px;background:#c9c9c9;"></div>
<div class="a" style="left:1673px;top:99px;width:21px;height:914px;background:#f2f2f2;"></div>
<svg class="a" style="left:1678px;top:111px;" width="12" height="13" viewBox="0 0 12 13"><path d="M6 0.5c-2.7 0-4.2 2-4.2 4.6V8L0.5 10h11L10.2 8V5.1C10.2 2.5 8.7 0.5 6 0.5z" fill="#6e6e6e"/><path d="M4.5 11.5h3" stroke="#6e6e6e" stroke-width="1.5"/></svg>
<div class="a t" style="left:0px;top:-12.00px;font-size:13px;line-height:16px;color:#2b2b2b;transform-origin:0 0;transform:translate(1690px,126.5px) rotate(90deg);left:0;top:0;">Notifications</div>
<svg class="a" style="left:1678px;top:222px;" width="11" height="13" viewBox="0 0 11 13"><rect x="0.5" y="0.5" width="10" height="12" fill="#fff" stroke="#9a9a9a"/><circle cx="3" cy="3.5" r="1" fill="#2a9a2a"/><circle cx="3" cy="6.5" r="1" fill="#2a9a2a"/><circle cx="3" cy="9.5" r="1" fill="#2a9a2a"/><path d="M5 3.5h4M5 6.5h4M5 9.5h4" stroke="#9a9a9a" stroke-width="0.9"/></svg>
<div class="a t" style="left:0px;top:-12.00px;font-size:13px;line-height:16px;color:#2b2b2b;transform-origin:0 0;transform:translate(1690px,239px) rotate(90deg);left:0;top:0;">Context Actions 2</div>
<div class="a t" style="left:0px;top:-12.00px;font-size:13px;line-height:16px;color:#2b2b2b;transform-origin:0 0;transform:translate(1690px,363px) rotate(90deg);left:0;top:0;">Context Actions</div>
<div class="a" style="left:14px;top:1013px;width:1680px;height:1px;background:#d6d6d6;"></div>
<div class="a" style="left:14px;top:1014px;width:1680px;height:22px;background:#f2f2f2;"></div>
<svg class="a" style="left:49px;top:1019px;" width="10" height="13" viewBox="0 0 10 13"><circle cx="2.2" cy="2.2" r="1.6" fill="none" stroke="#555" stroke-width="1.2"/><path d="M2.2 4v8.5" stroke="#555" stroke-width="1.6"/><path d="M8.2 2.5c0 4-6 3-6 7" fill="none" stroke="#555" stroke-width="1.5"/></svg>
<div class="a t" style="left:65.5px;top:1018.00px;font-size:13px;line-height:16px;color:#1f1f1f;letter-spacing:-0.136px;">Version Control</div>
<svg class="a" style="left:175px;top:1018px;" width="13" height="13" viewBox="0 0 13 13"><circle cx="5.3" cy="5.3" r="4" fill="none" stroke="#555" stroke-width="1.6"/><path d="M8.3 8.3l4 4" stroke="#555" stroke-width="1.8"/></svg>
<div class="a t" style="left:192px;top:1018.00px;font-size:13px;line-height:16px;color:#1f1f1f;letter-spacing:-1.060px;">Usages</div>
<svg class="a" style="left:250px;top:1019px;" width="12" height="11" viewBox="0 0 12 11"><path d="M0 1.5h2M0 5.5h2M0 9.5h2M3.5 1.5h8M3.5 5.5h8M3.5 9.5h8" stroke="#555" stroke-width="1.4"/></svg>
<div class="a t" style="left:266.2px;top:1018.00px;font-size:13px;line-height:16px;color:#1f1f1f;letter-spacing:-0.026px;">ToDo</div>
<svg class="a" style="left:317px;top:1019px;" width="11" height="11" viewBox="0 0 11 11"><path d="M0 1.5h10.5M0 5.5h7M0 9.5h8.5" stroke="#555" stroke-width="1.5"/></svg>
<div class="a t" style="left:333.2px;top:1018.00px;font-size:13px;line-height:16px;color:#1f1f1f;letter-spacing:-0.781px;">Messages</div>
<svg class="a" style="left:408.5px;top:1018px;" width="11" height="12" viewBox="0 0 11 12"><rect x="0" y="0" width="11" height="12" fill="#555"/><path d="M2 3.5l3 2.5-3 2.5" fill="none" stroke="#f2f2f2" stroke-width="1.2"/><path d="M5.5 9.5h4" stroke="#f2f2f2" stroke-width="1.2"/></svg>
<div class="a t" style="left:425px;top:1018.00px;font-size:13px;line-height:16px;color:#1f1f1f;letter-spacing:-0.604px;">Console</div>
<div class="a t" style="left:489px;top:1018.00px;font-size:13px;line-height:16px;color:#1f1f1f;letter-spacing:-0.154px;">Chart</div>
<svg class="a" style="left:539.5px;top:1018px;" width="11" height="12" viewBox="0 0 11 12"><rect x="0" y="0" width="11" height="12" fill="#555"/><path d="M2 3.5l3 2.5-3 2.5" fill="none" stroke="#f2f2f2" stroke-width="1.2"/><path d="M5.5 9.5h4" stroke="#f2f2f2" stroke-width="1.2"/></svg>
<div class="a t" style="left:556px;top:1018.00px;font-size:13px;line-height:16px;color:#1f1f1f;letter-spacing:0.136px;">Terminal</div>
<svg class="a" style="left:1594px;top:1019px;" width="11" height="12" viewBox="0 0 11 12"><path d="M2.5 0.5h6l1 6h-8z" fill="#555"/><rect x="0.5" y="6" width="10" height="2" fill="#555"/><path d="M3.5 8v3.5h4V8" fill="#555"/></svg>
<div class="a t" style="left:1610.3px;top:1018.00px;font-size:13px;line-height:16px;color:#1f1f1f;letter-spacing:-0.188px;">Inspector</div>
<div class="a" style="left:14px;top:1035px;width:1680px;height:1px;background:#d6d6d6;"></div>
<div class="a" style="left:14px;top:1036px;width:1680px;height:26px;background:#f2f2f2;"></div>
<svg class="a" style="left:20px;top:1043px;" width="12" height="11" viewBox="0 0 12 11"><rect x="2.5" y="0.5" width="9" height="8" fill="none" stroke="#666"/><path d="M0.5 2.5v8h9" fill="none" stroke="#666"/></svg>
<div class="a t" style="left:41.2px;top:1040.15px;font-size:14px;line-height:17px;color:#1f1f1f;letter-spacing:0.438px;">Error: Flow is missing outcome &#x27;Failed&#x27; on bulk flow &#x27;BatchFlow&#x27;</div>
<div class="a" style="left:1286px;top:1036px;width:6px;height:26px;background:#b8b8b8;"></div>
<div class="a t" style="left:1292px;top:1040.15px;font-size:14px;line-height:17px;color:#1f1f1f;letter-spacing:0.320px;">1130 of 19554</div>
<svg class="a" style="left:1390px;top:1042px;" width="16" height="16" viewBox="0 0 16 16"><rect x="1" y="1" width="7" height="6.8" fill="#8fd3ee"/><rect x="8.2" y="3" width="6.8" height="6.8" fill="#f3cf8e"/><rect x="3" y="8" width="7" height="6.8" fill="#dccbf8"/><text x="2.3" y="7" font-size="6.5" font-weight="700" font-family="Liberation Sans" fill="#444">D</text><text x="9.8" y="9" font-size="6.5" font-weight="700" font-family="Liberation Sans" fill="#444">L</text><text x="4.5" y="14" font-size="6.5" font-weight="700" font-family="Liberation Sans" fill="#444">S</text></svg>
<div class="a" style="left:1409px;top:1036px;width:1px;height:26px;background:#c9c9c9;"></div>
<div class="a" style="left:1422px;top:1042px;width:14px;height:14px;background:#d9c8f5;border-radius:2px;"></div>
<div class="a t" style="left:1425.5px;top:1044.04px;font-size:10px;line-height:12px;color:#444;font-weight:700;">T</div>
<div class="a t" style="left:1436.6px;top:1042.52px;font-size:11.5px;line-height:14px;color:#1f1f1f;letter-spacing:0.168px;">:ON</div>
<svg class="a" style="left:1484px;top:1040px;" width="14" height="17" viewBox="0 0 14 17"><circle cx="9.5" cy="2.2" r="2" fill="#111"/><path d="M3 6l4-1.5 3 2.5 2.5 1.5M7 5l-2 6-3.5 2M5.5 10l3.5 2-1 4.5M7.5 6l-2.5 1.5" fill="none" stroke="#111" stroke-width="1.8"/></svg>
<div class="a t" style="left:1498.8px;top:1042.52px;font-size:11.5px;line-height:14px;color:#1f1f1f;letter-spacing:-0.386px;">ISolvables</div>
<svg class="a" style="left:1564.5px;top:1043px;" width="13" height="13" viewBox="0 0 13 13"><circle cx="6.5" cy="6.5" r="6.3" fill="#c9c9c9"/><path d="M6.5 2.8v4.5" stroke="#fff" stroke-width="1.8"/><circle cx="6.5" cy="9.6" r="1" fill="#fff"/></svg>
<div class="a" style="left:1583px;top:1036px;width:12px;height:26px;background:#b8b8b8;"></div>
<div class="a" style="left:1595px;top:1036px;width:31px;height:26px;background:#d0d0d0;"></div>
<div class="a t" style="left:1590.3px;top:1040.15px;font-size:14px;line-height:17px;color:#1f1f1f;letter-spacing:0.383px;">999 of 8192M</div>
</body></html>
